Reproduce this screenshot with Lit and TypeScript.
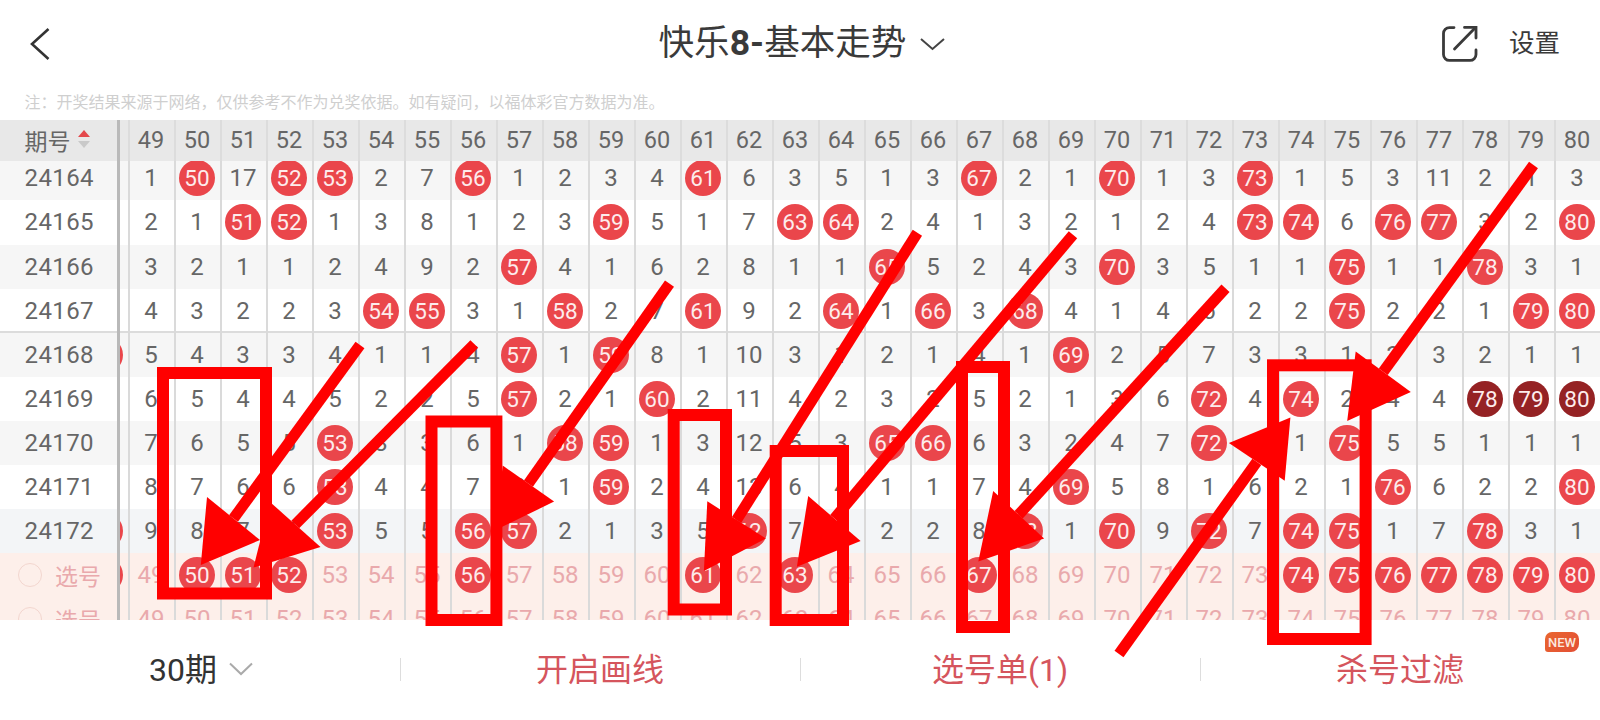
import { LitElement, html, css, svg } from "lit";
import { customElement } from "lit/decorators.js";

type Kind = "n" | "b" | "d";
// one token per column, from 48 to 80: plain number, "*" = ball, "#" = dark ball
const ROWS: { id: string; cells: string; cls: string }[] = [
  { id: "24164", cls: "g", cells: "0 1 * 17 * * 2 7 * 1 2 3 4 * 6 3 5 1 3 * 2 1 * 1 3 * 1 5 3 11 2 1 3" },
  { id: "24165", cls: "w", cells: "0 2 1 * * 1 3 8 1 2 3 * 5 1 7 * * 2 4 1 3 2 1 2 4 * * 6 * * 3 2 *" },
  { id: "24166", cls: "g", cells: "0 3 2 1 1 2 4 9 2 * 4 1 6 2 8 1 1 * 5 2 4 3 * 3 5 1 1 * 1 1 * 3 1" },
  { id: "24167", cls: "w sep", cells: "0 4 3 2 2 3 * * 3 1 * 2 7 * 9 2 * 1 * 3 * 4 1 4 6 2 2 * 2 2 1 * *" },
  { id: "24168", cls: "g", cells: "* 5 4 3 3 4 1 1 4 * 1 * 8 1 10 3 1 2 1 4 1 * 2 5 7 3 3 1 3 3 2 1 1" },
  { id: "24169", cls: "w", cells: "0 6 5 4 4 5 2 2 5 * 2 1 * 2 11 4 2 3 2 5 2 1 3 6 * 4 * 2 4 4 # # #" },
  { id: "24170", cls: "g", cells: "0 7 6 5 5 * 3 3 6 1 * * 1 3 12 5 3 * * 6 3 2 4 7 * 5 1 * 5 5 1 1 1" },
  { id: "24171", cls: "w", cells: "0 8 7 6 6 * 4 4 7 2 1 * 2 4 13 6 4 1 1 7 4 * 5 8 1 6 2 1 * 6 2 2 *" },
  { id: "24172", cls: "b", cells: "* 9 8 7 7 * 5 5 * * 2 1 3 5 * 7 5 2 2 8 * 1 * 9 * 7 * * 1 7 * 3 1" },
];
const SEL_BALLS = [48, 50, 51, 52, 56, 61, 63, 67, 74, 75, 76, 77, 78, 79, 80];

const RECTS = [
  [157, 367, 272, 599.5],
  [425.5, 415.5, 502.4, 626],
  [667.7, 409, 732, 615.5],
  [769.7, 445, 849, 626],
  [956, 361, 1010, 633],
  [1267, 359.3, 1371.6, 645],
];
// tail, tip, head corner, head corner
const ARROWS = [
  [360, 345, 200.8, 565, 207, 497, 260, 540],
  [474.3, 344, 253.5, 567.6, 270, 502, 320.5, 547],
  [669.5, 283.7, 495.6, 530, 502.7, 465.6, 554.1, 501.6],
  [917.4, 232.7, 703.9, 571, 707.3, 501.3, 765.9, 538.5],
  [1073, 234.7, 796.9, 566.7, 808.2, 496.1, 860.6, 540.9],
  [1225.5, 288.3, 978.3, 561.6, 993.2, 491, 1044.1, 538.5],
  [1119, 654, 1290.4, 417.5, 1228.9, 443, 1284.7, 480.7],
  [1533.5, 165, 1347.2, 420.9, 1355.7, 351.6, 1410.8, 392],
];

@customElement("app-root")
export class AppRoot extends LitElement {
  static styles = css`
    :host {
      display: block;
      position: relative;
      width: 1600px;
      height: 720px;
      overflow: hidden;
      background: #fff;
      font-family: Roboto, "Noto Sans CJK SC", sans-serif;
      color: #333;
    }
    .top {
      height: 88px;
      display: grid;
      grid-template-columns: 1fr auto 1fr;
      align-items: center;
    }
    .back { padding-left: 30px; display: flex; }
    .title {
      display: flex;
      align-items: center;
      gap: 14px;
      padding-left: 4px;
      font-size: 35.6px;
      color: #3a3a3a;
      line-height: 1;
    }
    .title b { font-weight: 700; }
    .actions {
      display: flex;
      justify-content: flex-end;
      align-items: center;
      gap: 31px;
      padding-right: 40px;
      font-size: 25.5px;
      color: #3a3a3a;
    }
    .actions span { margin-top: -8px; }
    svg { display: block; }
    .note {
      box-sizing: border-box;
      height: 32px;
      padding: 0 0 6px 24.5px;
      display: flex;
      align-items: center;
      font-size: 16px;
      color: #cfcfcf;
      white-space: nowrap;
    }
    .table {
      height: 500px;
      overflow: hidden;
      color: #666;
    }
    .row {
      height: 44.1px;
      display: flex;
      position: relative;
    }
    .head {
      height: 40.5px;
      background: #e8e8e8;
      z-index: 1;
      margin-bottom: -4.2px;
      color: #666;
    }
    .g { background: #f6f6f6; }
    .w { background: #fff; }
    .b { background: #f3f5f7; }
    .s { background: #fdefea; color: #e9a9ac; }
    .sep { box-shadow: inset 0 -2px 0 #dcdcdc; }
    .first {
      box-sizing: border-box;
      flex: 0 0 120px;
      border-right: 3.4px solid #b9b9b9;
      padding-left: 24.5px;
      display: flex;
      align-items: center;
      font-size: 24px;
      letter-spacing: 0.4px;
    }
    .head .first, .s .first { font-size: 23px; letter-spacing: 0; }
    .s .first { padding-left: 18px; gap: 13px; }
    .radio {
      box-sizing: border-box;
      width: 24px;
      height: 24px;
      border-radius: 50%;
      border: 1.5px solid #f3d6cf;
    }
    .sort { margin: -2px 0 0 7px; display: flex; flex-direction: column; gap: 4px; }
    .up, .down { width: 0; height: 0; border-left: 6.5px solid transparent; border-right: 6.5px solid transparent; }
    .up { border-bottom: 7.5px solid #e4494c; }
    .down { border-top: 7.5px solid #c9c9c9; }
    .cells { flex: 1; display: flex; overflow: hidden; }
    .cell {
      box-sizing: border-box;
      flex: 0 0 46px;
      border-left: 2px solid #dadada;
      padding-right: 2px;
      display: flex;
      align-items: center;
      justify-content: center;
      font-size: 24px;
    }
    .cell:first-child { margin-left: -38px; }
    .head .cell { border-left-color: #dcdcdc; font-size: 23.5px; }
    .ball {
      flex: none;
      width: 36px;
      height: 36px;
      border-radius: 50%;
      background: #ea464b;
      color: #fdecec;
      font-size: 22.5px;
      display: flex;
      align-items: center;
      justify-content: center;
    }
    .ball.dark { background: #952224; }
    .bar {
      height: 100px;
      box-sizing: border-box;
      padding-bottom: 7px;
      background: #fff;
      display: grid;
      grid-template-columns: repeat(4, 400px);
      font-size: 32px;
      color: #d5555d;
    }
    .item {
      position: relative;
      display: flex;
      align-items: center;
      justify-content: center;
      gap: 12px;
    }
    .item + .item::before {
      content: "";
      position: absolute;
      left: 0;
      top: 38px;
      width: 1px;
      height: 23px;
      background: #ddd;
    }
    .period { color: #333; padding-left: 2px; }
    .period svg { margin-top: 5px; }
    .new {
      position: absolute;
      right: 21px;
      top: 12px;
      width: 34px;
      height: 20px;
      border-radius: 7px 7px 8px 3px;
      background: linear-gradient(135deg, #e9662f, #e34f35);
      color: #fbe9df;
      font-size: 13px;
      font-weight: 500;
      display: flex;
      align-items: center;
      justify-content: center;
    }
    .marks {
      position: absolute;
      left: 0;
      top: 0;
      pointer-events: none;
      z-index: 2;
    }
  `;

  private cell(num: number, token: string) {
    let kind: Kind = "n";
    if (token === "*") kind = "b";
    if (token === "#") kind = "d";
    const label = kind === "n" ? (token === "0" ? "" : token) : String(num);
    return html`<div class="cell">
      ${kind === "n" ? label : html`<span class="ball ${kind === "d" ? "dark" : ""}">${label}</span>`}
    </div>`;
  }

  private selRow(balls: number[]) {
    const cols = Array.from({ length: 33 }, (_, i) => 48 + i);
    return html`<div class="row s">
      <div class="first"><span class="radio"></span><span>选号</span></div>
      <div class="cells">
        ${cols.map((n) =>
          balls.includes(n)
            ? this.cell(n, "*")
            : html`<div class="cell">${n === 48 ? "" : n}</div>`
        )}
      </div>
    </div>`;
  }

  render() {
    const cols = Array.from({ length: 33 }, (_, i) => 48 + i);
    return html`
      <div class="top">
        <div class="back">
          <svg width="22" height="34" viewBox="0 0 22 34" fill="none" stroke="#333" stroke-width="2.6">
            <path d="M18.5 2 L2 17 L18.5 32" />
          </svg>
        </div>
        <div class="title">
          <span>快乐<b>8-</b>基本走势</span>
          <svg width="25" height="14" viewBox="0 0 25 14" fill="none" stroke="#444" stroke-width="2">
            <path d="M1 2 L12.5 12 L24 2" />
          </svg>
        </div>
        <div class="actions">
          <svg width="36" height="36" viewBox="0 0 36 36" fill="none" stroke="#3a3a3a" stroke-width="2.8" stroke-linecap="round">
            <path d="M12 1.6 H7.5 a6 6 0 0 0 -6 6 V28.4 a6 6 0 0 0 6 6 H28 a6 6 0 0 0 6 -6 V24" />
            <path d="M12.5 23 L33 2" />
            <path d="M22.5 1.4 H34 V12" />
          </svg>
          <span>设置</span>
        </div>
      </div>
      <div class="note">注：开奖结果来源于网络，仅供参考不作为兑奖依据。如有疑问，以福体彩官方数据为准。</div>
      <div class="table">
        <div class="row head">
          <div class="first">
            <span>期号</span>
            <span class="sort"><i class="up"></i><i class="down"></i></span>
          </div>
          <div class="cells">${cols.map((n) => html`<div class="cell">${n === 48 ? "" : n}</div>`)}</div>
        </div>
        ${ROWS.map((r) => {
          const toks = r.cells.split(" ");
          return html`<div class="row ${r.cls}">
            <div class="first">${r.id}</div>
            <div class="cells">${toks.map((t, i) => this.cell(48 + i, t))}</div>
          </div>`;
        })}
        ${this.selRow(SEL_BALLS)} ${this.selRow([])}
      </div>
      <div class="bar">
        <div class="item period">
          <span>30期</span>
          <svg width="24" height="14" viewBox="0 0 24 14" fill="none" stroke="#aaa" stroke-width="2">
            <path d="M1 1.5 L12 12 L23 1.5" />
          </svg>
        </div>
        <div class="item">开启画线</div>
        <div class="item">选号单(1)</div>
        <div class="item">杀号过滤<span class="new">NEW</span></div>
      </div>
      <svg class="marks" width="1600" height="720" viewBox="0 0 1600 720">
        ${RECTS.map(
          ([a, b, c, d]) => svg`<rect x=${a + 6} y=${b + 6} width=${c - a - 12} height=${d - b - 12} fill="none" stroke="#f00" stroke-width="12" />`
        )}
        ${ARROWS.map(([tx, ty, px, py, ax, ay, bx, by]) => svg`
          <line x1=${tx} y1=${ty} x2=${(ax + bx) / 2} y2=${(ay + by) / 2} stroke="#f00" stroke-width="11" />
          <polygon points="${px},${py} ${ax},${ay} ${bx},${by}" fill="#f00" />
        `)}
      </svg>
    `;
  }
}
